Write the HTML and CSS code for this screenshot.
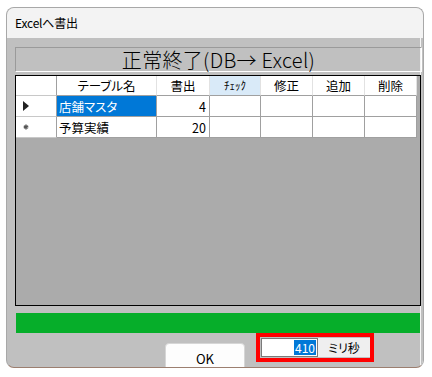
FILE: index.html
```
<!DOCTYPE html>
<html lang="ja">
<head>
<meta charset="utf-8">
<title>Excelへ書出</title>
<link rel="stylesheet" href="styles.css">
</head>
<body>
<div class="window">
  <div class="titlebar">Excelへ書出</div>
  <div class="client">
    <div class="status">正常終了(DB→ Excel)</div>
    <div class="grid">
      <div class="table">
        <div class="cell hd rh"></div>
        <div class="cell hd">テーブル名</div>
        <div class="cell hd">書出</div>
        <div class="cell hd sel-col">ﾁｪｯｸ</div>
        <div class="cell hd">修正</div>
        <div class="cell hd">追加</div>
        <div class="cell hd last">削除</div>

        <div class="cell rh"><svg width="6" height="10" viewBox="0 0 6 10"><path d="M0 0 L6 5 L0 10 Z" fill="#222"/></svg></div>
        <div class="cell txt current">店舗マスタ</div>
        <div class="cell num">4</div>
        <div class="cell"></div>
        <div class="cell"></div>
        <div class="cell"></div>
        <div class="cell"></div>

        <div class="cell rh"><svg width="6" height="6" viewBox="0 0 6 6"><path d="M3 0.5 V5.5 M0.8 1.8 L5.2 4.2 M0.8 4.2 L5.2 1.8" stroke="#555" stroke-width="1.4"/></svg></div>
        <div class="cell txt">予算実績</div>
        <div class="cell num">20</div>
        <div class="cell"></div>
        <div class="cell"></div>
        <div class="cell"></div>
        <div class="cell"></div>
      </div>
    </div>
    <div class="progress"></div>
    <div class="footer">
      <button class="ok">OK</button>
      <div class="timer">
        <div class="ms-input"><span class="selected">410</span></div>
        <div class="ms-label">ミリ秒</div>
      </div>
    </div>
  </div>
</div>
</body>
</html>
```

FILE: styles.css
```
html, body {
  margin: 0;
  padding: 0;
  background: #ffffff;
}

body {
  font-family: "Noto Sans CJK JP", "Noto Sans", sans-serif;
  color: #000;
}

.window {
  margin: 7px 0 0 6px;
  width: 418px;
  height: 361px;
  box-sizing: border-box;
  border: 1px solid #a8a8a8;
  border-bottom-color: #9c7f70;
  border-radius: 8px;
  overflow: hidden;
  background: #c0c0c0;
  display: flex;
  flex-direction: column;
}

.titlebar {
  height: 30px;
  flex: none;
  background: #f3f3f3;
  padding-left: 8px;
  font-size: 12px;
  line-height: 30px;
  letter-spacing: -0.2px;
  font-feature-settings: "palt";
}

.client {
  flex: 1;
  display: flex;
  flex-direction: column;
  box-shadow: inset -2px 0 0 #c0c0c0, inset -3px 0 0 #f4f4f4;
}

.status {
  margin: 9px 0 0 8px;
  width: 407px;
  height: 25px;
  box-sizing: border-box;
  border-top: 1px solid #9a9a9a;
  border-left: 1px solid #9a9a9a;
  border-right: 1px solid #ffffff;
  border-bottom: 1px solid #ffffff;
  font-size: 20px;
  font-weight: 300;
  line-height: 23px;
  letter-spacing: 0.3px;
  text-align: center;
  font-feature-settings: "palt";
}

.grid {
  margin: 3px 0 0 8px;
  width: 406px;
  height: 231px;
  box-sizing: border-box;
  border: 1px solid #000;
  background: #ababab;
}

.table {
  display: grid;
  grid-template-columns: 41px 100px 53px 51px 52px 52px 52px;
  grid-template-rows: 20px 21px 21px;
  font-size: 12.5px;
  font-feature-settings: "palt";
}

.cell {
  box-sizing: border-box;
  background: #ffffff;
  border-right: 1px solid #a0a0a0;
  border-bottom: 1px solid #a0a0a0;
  display: flex;
  align-items: center;
  overflow: hidden;
  white-space: nowrap;
}

.hd {
  justify-content: center;
  border-right-color: #e2e2e2;
  line-height: 19px;
}

.hd.rh {
  border-right-color: #a0a0a0;
}

.rh {
  padding-left: 7px;
  border-bottom-color: #c8c8c8;
}

.sel-col {
  background: #d9eaf8;
  font-size: 11px;
}

.txt {
  padding-left: 2px;
}

.current {
  background: #0078d7;
  color: #ffffff;
}

.num {
  justify-content: flex-end;
  padding-right: 3px;
}

.progress {
  margin: 7px 0 0 9px;
  width: 404px;
  height: 20px;
  flex: none;
  background: #06ae2a;
}

.footer {
  display: flex;
  align-items: flex-start;
  padding-left: 158px;
}

.ok {
  margin: 10px 0 0 0;
  width: 80px;
  height: 32px;
  box-sizing: border-box;
  padding: 0;
  border: 1px solid #d6d6d6;
  border-radius: 4px;
  background: #fdfdfd;
  font-family: "Noto Sans CJK JP", "Noto Sans", sans-serif;
  font-size: 13px;
  line-height: 22px;
  display: block;
  text-align: center;
  color: #000;
}

.timer {
  margin-left: 11px;
  width: 118px;
  height: 29px;
  box-sizing: border-box;
  border: 4px solid #ff0000;
  padding: 1px 0 1px 1px;
  display: flex;
  background: #c0c0c0;
}

.ms-input {
  width: 57px;
  height: 19px;
  box-sizing: border-box;
  border: 1px solid #7a7a7a;
  background: #ffffff;
  display: flex;
  justify-content: flex-end;
  align-items: center;
  padding-right: 1px;
}

.selected {
  background: #0078d7;
  color: #ffffff;
  font-size: 12px;
  line-height: 15px;
  height: 15px;
  padding: 0 1px;
}

.ms-label {
  width: 52px;
  height: 19px;
  background: #efefef;
  font-size: 12px;
  line-height: 19px;
  text-align: center;
  font-feature-settings: "palt";
}
```
